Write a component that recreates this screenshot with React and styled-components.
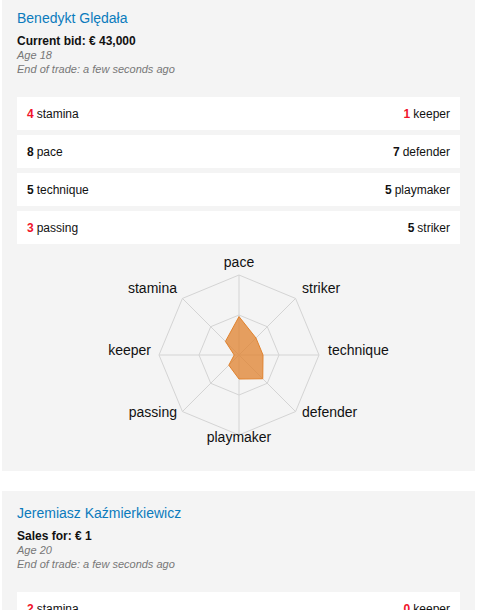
import React from 'react'
import styled, { createGlobalStyle } from 'styled-components'

const GlobalStyle = createGlobalStyle`
  body {
    margin: 0;
    background: #fff;
    font-family: "Liberation Sans", Arial, Helvetica, sans-serif;
    color: #111;
  }
`

const List = styled.div`
  display: flex;
  flex-direction: column;
  gap: 20px;
  margin-top: -4px;
  padding: 0 3px 0 2px;
`

const Card = styled.div`
  background-color: #f4f4f4;
  padding: 13px 15px 20px;
`

const Name = styled.a`
  display: block;
  color: #0b7bbd;
  font-size: 14px;
  line-height: 18px;
  text-decoration: none;
`

const Price = styled.div`
  margin-top: 7px;
  font-size: 12px;
  font-weight: bold;
  line-height: 14px;
`

const Meta = styled.div`
  color: #777;
  font-size: 11px;
  font-style: italic;
  line-height: 14px;
`

const Rows = styled.div`
  display: flex;
  flex-direction: column;
  gap: 5px;
  margin-top: 21px;
`

const Row = styled.div`
  display: flex;
  justify-content: space-between;
  align-items: center;
  height: 33px;
  padding: 0 10px;
  background: #fff;
  font-size: 12px;
`

const Num = styled.b`
  color: ${p => (p.$low ? '#f0142a' : '#111')};
  margin-right: 3px;
`

const ChartWrap = styled.div`
  display: flex;
  justify-content: center;
  margin-top: 7px;
`

const axes = ['pace', 'striker', 'technique', 'defender', 'playmaker', 'passing', 'keeper', 'stamina']

const Stat = ({ value, label }) => (
  <span>
    <Num $low={value < 5}>{value}</Num>
    {label}
  </span>
)

const Radar = ({ stats }) => {
  const cx = 150
  const cy = 104
  const pt = (i, r) => {
    const a = (Math.PI / 4) * i - Math.PI / 2
    return [cx + r * Math.cos(a), cy + r * Math.sin(a)]
  }
  const ring = r => axes.map((_, i) => pt(i, r).join(',')).join(' ')
  const data = axes.map((k, i) => pt(i, stats[k] * 4.8).join(',')).join(' ')
  const labels = [
    { x: 150, y: 12, a: 'middle' },
    { x: 213, y: 38, a: 'start' },
    { x: 239, y: 100, a: 'start' },
    { x: 213, y: 162, a: 'start' },
    { x: 150, y: 187, a: 'middle' },
    { x: 88, y: 162, a: 'end' },
    { x: 62, y: 100, a: 'end' },
    { x: 88, y: 38, a: 'end' },
  ]
  return (
    <svg width="300" height="200" viewBox="0 0 300 200">
      <g fill="none" stroke="#d4d4d4" strokeWidth="1">
        <polygon points={ring(40)} />
        <polygon points={ring(80)} />
        {axes.map((_, i) => {
          const [x, y] = pt(i, 80)
          return <line key={i} x1={cx} y1={cy} x2={x} y2={y} />
        })}
      </g>
      <polygon points={data} fill="#e0822e" fillOpacity="0.75" stroke="#e0822e" strokeWidth="1" />
      <g fontSize="14" fill="#111" fontFamily="Liberation Sans, Arial, sans-serif">
        {axes.map((k, i) => (
          <text key={k} x={labels[i].x} y={labels[i].y} textAnchor={labels[i].a} dominantBaseline="middle">
            {k}
          </text>
        ))}
      </g>
    </svg>
  )
}

const players = [
  {
    name: 'Benedykt Ględała',
    price: 'Current bid: € 43,000',
    age: 18,
    stats: { stamina: 4, keeper: 1, pace: 8, defender: 7, technique: 5, playmaker: 5, passing: 3, striker: 5 },
  },
  {
    name: 'Jeremiasz Kaźmierkiewicz',
    price: 'Sales for: € 1',
    age: 20,
    stats: { stamina: 2, keeper: 0, pace: 6, defender: 4, technique: 5, playmaker: 6, passing: 4, striker: 3 },
  },
]

const pairs = [
  ['stamina', 'keeper'],
  ['pace', 'defender'],
  ['technique', 'playmaker'],
  ['passing', 'striker'],
]

const PlayerCard = ({ player }) => (
  <Card>
    <Name href="#">{player.name}</Name>
    <Price>{player.price}</Price>
    <Meta>Age {player.age}</Meta>
    <Meta>End of trade: a few seconds ago</Meta>
    <Rows>
      {pairs.map(([l, r]) => (
        <Row key={l}>
          <Stat value={player.stats[l]} label={l} />
          <Stat value={player.stats[r]} label={r} />
        </Row>
      ))}
    </Rows>
    <ChartWrap>
      <Radar stats={player.stats} />
    </ChartWrap>
  </Card>
)

export default function App() {
  return (
    <>
      <GlobalStyle />
      <List>
        {players.map(p => (
          <PlayerCard key={p.name} player={p} />
        ))}
      </List>
    </>
  )
}
